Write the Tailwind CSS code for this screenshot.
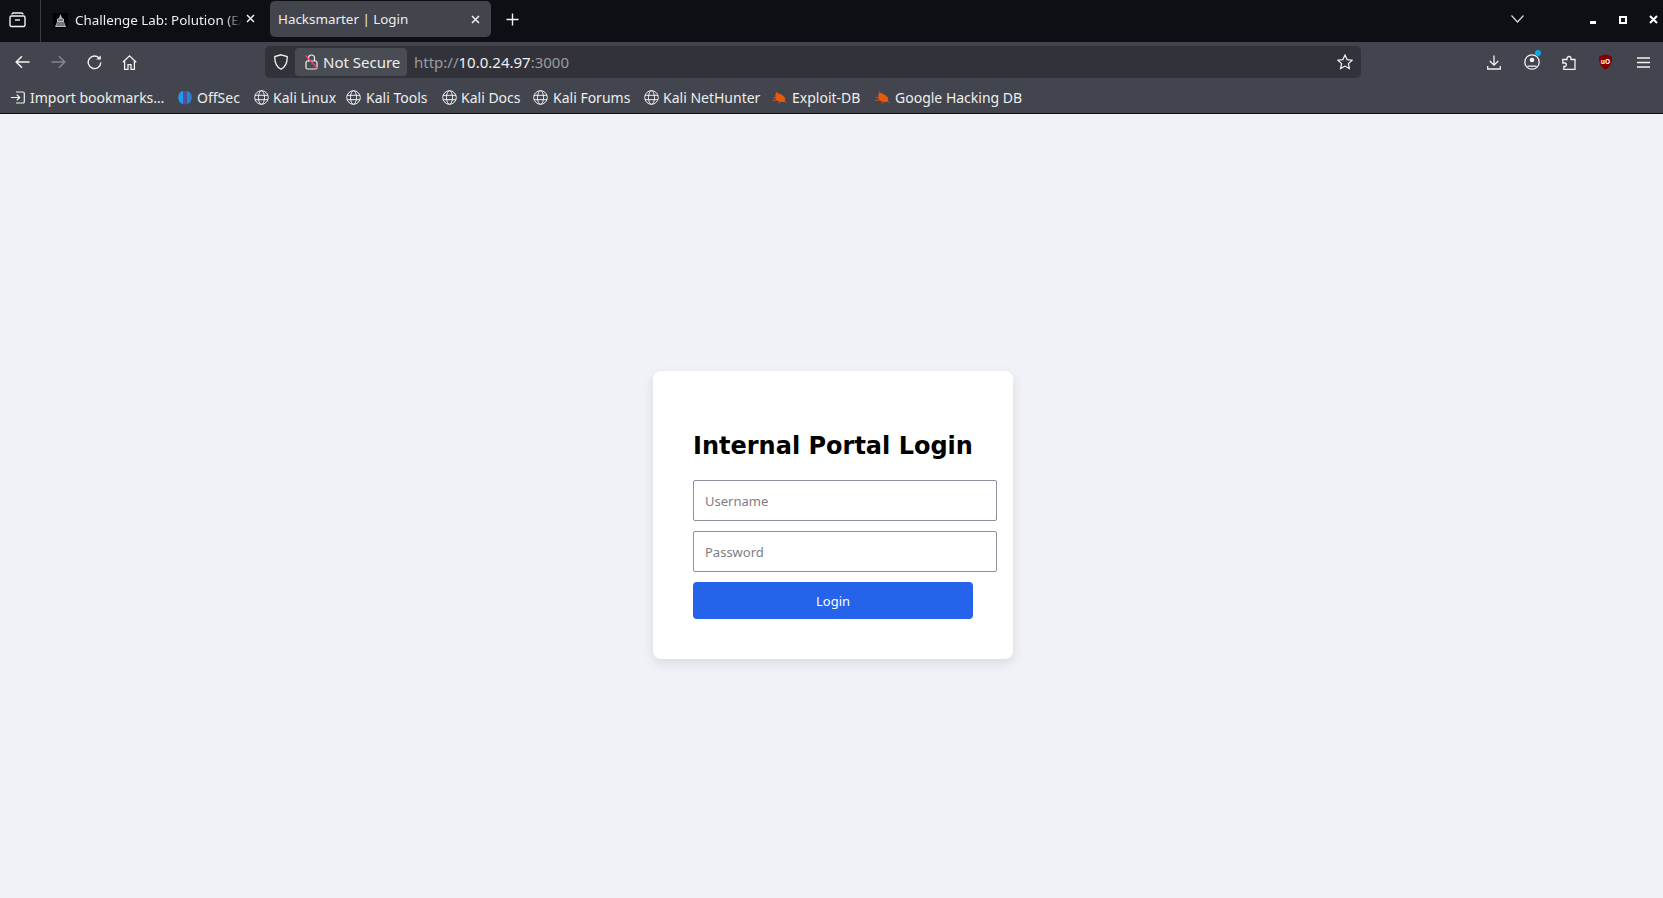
<!DOCTYPE html>
<html lang="en">
<head>
  <meta charset="UTF-8">
  <title>Hacksmarter | Login</title>
  <script src="https://cdn.jsdelivr.net/npm/@tailwindcss/browser@4"></script>
</head>
<body class="h-screen overflow-hidden flex flex-col bg-[#f0f2f7] font-['Noto_Sans',sans-serif]">
  <!-- Tab strip -->
  <div class="flex h-[42px] shrink-0 bg-[#0d0f14] text-[#eceded] text-[13.4px]">
    <div class="w-[41px] border-r border-[#3a3c42] flex items-center justify-center pr-[5px] pb-[3px]">
      <svg class="w-[17px] h-[17px]" viewBox="0 0 17 17" fill="none" stroke="#f2f2f2" stroke-width="1.4"><path d="M3 3.5 A1.5 1.5 0 0 1 4.5 2 H12.5 A1.5 1.5 0 0 1 14 3.5"/><rect x="1" y="5" width="15" height="10.5" rx="1.5"/><path d="M6 9 H11"/></svg>
    </div>
    <div class="w-[229px] flex items-center pl-[12px] pb-[2px] relative">
      <svg class="w-[15px] h-[15px] shrink-0" viewBox="0 0 15 15"><rect width="15" height="15" fill="#000"/><path d="M7.5 1 L9 5 L11 6 V9 L13 14 H2 L4 9 V6 L6 5 Z" fill="#b9bcc0"/><path d="M5 7 H10 M4 10 H11 M3.5 12 H11.5" stroke="#222" stroke-width="0.9"/></svg>
      <span class="ml-[7px] w-[167px] overflow-hidden whitespace-nowrap [mask-image:linear-gradient(to_right,black_90%,transparent)]">Challenge Lab: Polution (EASY)</span>
      <svg class="absolute left-[204px] top-[13px] w-[11px] h-[11px]" viewBox="0 0 11 11" stroke="#f2f2f2" stroke-width="1.5"><path d="M2 2 L9 9 M9 2 L2 9"/></svg>
    </div>
    <div class="w-[221px] h-[36px] mt-[1px] rounded-[5px] bg-[#43454d] flex items-center pl-[8px] pr-[10px] justify-between">
      <span class="whitespace-nowrap">Hacksmarter | Login</span>
      <svg class="w-[11px] h-[11px]" viewBox="0 0 11 11" stroke="#f2f2f2" stroke-width="1.5"><path d="M2 2 L9 9 M9 2 L2 9"/></svg>
    </div>
    <div class="w-[43px] flex items-center justify-center pb-[3px]">
      <svg class="w-[13px] h-[13px]" viewBox="0 0 13 13" stroke="#f2f2f2" stroke-width="1.4"><path d="M6.5 0.5 V12.5 M0.5 6.5 H12.5"/></svg>
    </div>
    <div class="ml-auto flex items-center pb-[3px]">
      <svg class="w-[13px] h-[8px] mr-[54px] mb-[2px]" viewBox="0 0 13 8" fill="none" stroke="#d8d8d8" stroke-width="1.2"><path d="M0.5 0.5 L6.5 7 L12.5 0.5"/></svg>
      <div class="w-[30px] flex justify-center pt-[6px]"><div class="w-[6px] h-[3px] bg-white"></div></div>
      <div class="w-[30px] flex justify-center"><div class="w-[8px] h-[8px] border-[2px] border-white"></div></div>
      <div class="w-[25px] flex justify-end pr-[5px]">
        <svg class="w-[9px] h-[9px]" viewBox="0 0 9 9" stroke="#fff" stroke-width="2"><path d="M1 1 L8 8 M8 1 L1 8"/></svg>
      </div>
    </div>
  </div>

  <!-- Navigation toolbar -->
  <div class="flex items-center h-[36px] shrink-0 bg-[#42454d] pt-[4px]">
    <div class="w-[44px] flex justify-center">
      <svg class="w-[15px] h-[14px]" viewBox="0 0 15 14" fill="none" stroke="#f2f2f2" stroke-width="1.5"><path d="M14.5 7 H1.5 M7 1.2 L1.2 7 L7 12.8"/></svg>
    </div>
    <div class="w-[28px] flex justify-center">
      <svg class="w-[15px] h-[14px]" viewBox="0 0 15 14" fill="none" stroke="#85878d" stroke-width="1.5"><path d="M0.5 7 H13.5 M8 1.2 L13.8 7 L8 12.8"/></svg>
    </div>
    <div class="w-[44px] flex justify-center">
      <svg class="w-[15px] h-[15px]" viewBox="0 0 15 15" fill="none" stroke="#f2f2f2" stroke-width="1.4"><path d="M12.6 3.6 A6.3 6.3 0 1 0 13.8 7.5"/><path d="M9.2 4.6 H13.8 V0.4 Z" fill="#f2f2f2" stroke="none"/></svg>
    </div>
    <div class="w-[26px] flex justify-center">
      <svg class="w-[15px] h-[15px]" viewBox="0 0 15 15" fill="none" stroke="#f2f2f2" stroke-width="1.3"><path d="M0.8 7.2 L7.5 0.9 L14.2 7.2 M2.6 6 V14.3 H6 V9.6 H9 V14.3 H12.4 V6"/></svg>
    </div>
    <!-- URL bar -->
    <div class="ml-[123px] w-[1096px] h-[32px] rounded-[5px] bg-[#32333a] flex items-center">
      <svg class="ml-[9px] w-[14px] h-[16px]" viewBox="0 0 14 16" fill="none" stroke="#f2f2f2" stroke-width="1.3"><path d="M7 0.8 L13.2 2.6 C13.5 9 11 13 7 15.2 C3 13 0.5 9 0.8 2.6 Z"/></svg>
      <div class="ml-[7px] w-[112px] h-[28px] rounded-[4px] bg-[#4a4c53] flex items-center pl-[10px] text-[#eeeeee] text-[15px]">
        <svg class="w-[13px] h-[16px] shrink-0" viewBox="0 0 13 16" fill="none" stroke="#f2f2f2" stroke-width="1.2"><path d="M3.5 7 V4 A3 3 0 0 1 9.5 4 V7"/><rect x="1" y="7" width="11" height="8" rx="1.5"/><path d="M0.5 1.5 L12.5 14.5" stroke="#ff3b6b" stroke-width="1.2"/></svg>
        <span class="ml-[5px] whitespace-nowrap">Not Secure</span>
      </div>
      <div class="ml-[7px] text-[15px] whitespace-nowrap text-[#9a9ba0]">http://<span class="text-[#f0f0f0]">10.0.24.97</span>:3000</div>
      <svg class="ml-auto mr-[8px] w-[16px] h-[16px]" viewBox="0 0 16 16" fill="none" stroke="#f2f2f2" stroke-width="1.2"><path d="M8 1 L10.1 5.6 L15.1 6.2 L11.4 9.6 L12.4 14.6 L8 12.1 L3.6 14.6 L4.6 9.6 L0.9 6.2 L5.9 5.6 Z"/></svg>
    </div>
    <div class="ml-auto flex items-center">
      <div class="w-[38px] flex justify-center">
        <svg class="w-[14px] h-[15px]" viewBox="0 0 14 15" fill="none" stroke="#f2f2f2" stroke-width="1.3"><path d="M7 0.5 V10 M2.8 6 L7 10.2 L11.2 6 M0.7 11 V14 H13.3 V11"/></svg>
      </div>
      <div class="w-[37px] flex justify-center relative">
        <svg class="w-[16px] h-[16px]" viewBox="0 0 16 16" fill="none" stroke="#f2f2f2" stroke-width="1.3"><circle cx="8" cy="8" r="7.2"/><circle cx="8" cy="6" r="2.3" fill="#f2f2f2" stroke="none"/><path d="M3.5 11.5 H12.5 V12.8 H3.5 Z" fill="#f2f2f2" stroke="none"/></svg>
        <div class="absolute top-[-4px] left-[22px] w-[6px] h-[6px] rounded-full bg-[#0ea5f0]"></div>
      </div>
      <div class="w-[37px] flex justify-center">
        <svg class="w-[14px] h-[15px]" viewBox="0 0 14 15" fill="none" stroke="#f2f2f2" stroke-width="1.3"><path d="M5 3.5 A2 2 0 1 1 9 3.5 V4.5 H13 V14.3 H1.8 V11.5 H3 A1.8 1.8 0 0 0 3 8 H0.8 V4.5 H5 Z"/></svg>
      </div>
      <div class="w-[37px] flex justify-center">
        <svg class="w-[15px] h-[16px]" viewBox="0 0 14 16"><path d="M7 0.3 L13.5 2.5 C14 9 11 13.5 7 15.7 C3 13.5 0 9 0.5 2.5 Z" fill="#800000"/><text x="7" y="10" text-anchor="middle" font-size="6.5" font-weight="700" fill="#fff" font-family="'Noto Sans',sans-serif">uO</text></svg>
      </div>
      <div class="w-[39px] flex justify-center">
        <svg class="w-[13px] h-[11px]" viewBox="0 0 13 11" stroke="#f2f2f2" stroke-width="1.3"><path d="M0 1 H13 M0 5.5 H13 M0 10 H13"/></svg>
      </div>
    </div>
  </div>

  <!-- Bookmarks -->
  <div class="flex items-center h-[36px] shrink-0 bg-[#42454d] border-b border-[#0c0c0e] pt-[3px] text-[#eeeeee] text-[14px] whitespace-nowrap">
    <div class="flex items-center ml-[11px] w-[167px]">
      <svg class="w-[14px] h-[13px] mr-[5px]" viewBox="0 0 14 13" fill="none" stroke="#f2f2f2" stroke-width="1.2"><path d="M5 1 H12 A1.3 1.3 0 0 1 13.3 2.3 V10.7 A1.3 1.3 0 0 1 12 12 H5 M0 6.5 H8.5 M5.8 3.7 L8.7 6.5 L5.8 9.3"/></svg>
      <span>Import bookmarks…</span>
    </div>
    <div class="flex items-center w-[76px]">
      <svg class="w-[14px] h-[15px] mr-[5px]" viewBox="0 0 14 15"><path d="M5.4 1 C1.5 1.5 0.3 4.5 0.3 7.5 C0.3 10.5 1.5 13.5 5.4 14 Z" fill="#1d9be6"/><path d="M8.6 1 C12.5 1.5 13.7 4.5 13.7 7.5 C13.7 10.5 12.5 13.5 8.6 14 Z" fill="#2f7fd8"/><rect x="6.3" y="1.5" width="1.4" height="13" fill="#7a3fd0"/></svg>
      <span>OffSec</span>
    </div>
    <div class="flex items-center w-[92px]">
      <svg class="w-[15px] h-[15px] mr-[4px]" viewBox="0 0 15 15" fill="none" stroke="#eeeeee" stroke-width="1"><circle cx="7.5" cy="7.5" r="6.8"/><ellipse cx="7.5" cy="7.5" rx="3" ry="6.8"/><path d="M1 5.3 H14 M1 9.7 H14"/></svg>
      <span>Kali Linux</span>
    </div>
    <div class="flex items-center w-[96px]">
      <svg class="w-[15px] h-[15px] mr-[5px]" viewBox="0 0 15 15" fill="none" stroke="#eeeeee" stroke-width="1"><circle cx="7.5" cy="7.5" r="6.8"/><ellipse cx="7.5" cy="7.5" rx="3" ry="6.8"/><path d="M1 5.3 H14 M1 9.7 H14"/></svg>
      <span>Kali Tools</span>
    </div>
    <div class="flex items-center w-[91px]">
      <svg class="w-[15px] h-[15px] mr-[4px]" viewBox="0 0 15 15" fill="none" stroke="#eeeeee" stroke-width="1"><circle cx="7.5" cy="7.5" r="6.8"/><ellipse cx="7.5" cy="7.5" rx="3" ry="6.8"/><path d="M1 5.3 H14 M1 9.7 H14"/></svg>
      <span>Kali Docs</span>
    </div>
    <div class="flex items-center w-[111px]">
      <svg class="w-[15px] h-[15px] mr-[5px]" viewBox="0 0 15 15" fill="none" stroke="#eeeeee" stroke-width="1"><circle cx="7.5" cy="7.5" r="6.8"/><ellipse cx="7.5" cy="7.5" rx="3" ry="6.8"/><path d="M1 5.3 H14 M1 9.7 H14"/></svg>
      <span>Kali Forums</span>
    </div>
    <div class="flex items-center w-[128px]">
      <svg class="w-[15px] h-[15px] mr-[4px]" viewBox="0 0 15 15" fill="none" stroke="#eeeeee" stroke-width="1"><circle cx="7.5" cy="7.5" r="6.8"/><ellipse cx="7.5" cy="7.5" rx="3" ry="6.8"/><path d="M1 5.3 H14 M1 9.7 H14"/></svg>
      <span>Kali NetHunter</span>
    </div>
    <div class="flex items-center w-[103px]">
      <svg class="w-[15px] h-[13px] mr-[5px]" viewBox="0 0 15 13"><path d="M4 2 C7 1.5 11 4 13 7 C14 9.5 12 11.5 9 11 C6 10.5 1.5 8.5 4 2 Z" fill="#e8590c"/><path d="M1 6.5 L5 7.5 M0.5 9.5 L6 9 M4 0.5 L5.5 3 M7 12.5 L8.5 10 M14.5 11.5 L11 9.5" stroke="#e8590c" stroke-width="0.8"/></svg>
      <span>Exploit-DB</span>
    </div>
    <div class="flex items-center">
      <svg class="w-[15px] h-[13px] mr-[5px]" viewBox="0 0 15 13"><path d="M4 2 C7 1.5 11 4 13 7 C14 9.5 12 11.5 9 11 C6 10.5 1.5 8.5 4 2 Z" fill="#e8590c"/><path d="M1 6.5 L5 7.5 M0.5 9.5 L6 9 M4 0.5 L5.5 3 M7 12.5 L8.5 10 M14.5 11.5 L11 9.5" stroke="#e8590c" stroke-width="0.8"/></svg>
      <span>Google Hacking DB</span>
    </div>
  </div>

  <!-- Page -->
  <main class="flex-1 flex justify-center items-start pl-[3px] pt-[257px]">
    <div class="w-[360px] p-10 bg-white rounded-[8px] shadow-[0_4px_12px_rgba(0,0,0,0.1)]">
      <h2 class="mt-[21px] mb-[20px] text-[24px] leading-[28px] font-bold text-black whitespace-nowrap font-['DejaVu_Sans',sans-serif]">Internal Portal Login</h2>
      <input type="text" placeholder="Username" class="block w-[304px] h-[41px] mb-[10px] px-[11px] border border-[#8f8f9d] rounded-[2px] text-[13px] placeholder:text-[#7d7d82]">
      <input type="password" placeholder="Password" class="block w-[304px] h-[41px] mb-[10px] px-[11px] border border-[#8f8f9d] rounded-[2px] text-[13px] placeholder:text-[#7d7d82]">
      <button class="block w-[280px] h-[37px] pt-[2px] bg-[#2563eb] text-white rounded-[4px] text-[13px]">Login</button>
    </div>
  </main>
</body>
</html>
